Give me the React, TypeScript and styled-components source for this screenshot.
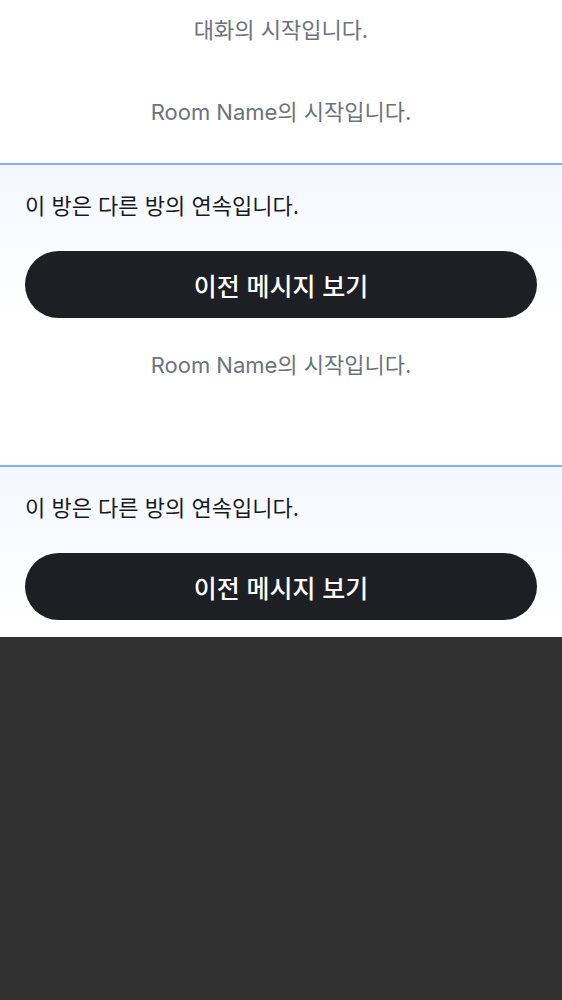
import React from "react";
import styled, { createGlobalStyle } from "styled-components";

const Global = createGlobalStyle`
  html, body { margin: 0; padding: 0; background: #313131; }
  body { font-family: Inter, "Noto Sans CJK KR", sans-serif; }
`;

const Timeline = styled.div`
  width: 562px;
  background: #ffffff;
  display: flex;
  flex-direction: column;
`;

const Notice = styled.div<{ $top: number; $bottom: number }>`
  padding: ${(p) => p.$top}px 0 ${(p) => p.$bottom}px;
  text-align: center;
  font-size: 22px;
  line-height: 28px;
  color: #6c737e;
`;

const Continuation = styled.section`
  border-top: 2px solid #7fb2f5;
  background: linear-gradient(180deg, #f3f7ff 0%, #ffffff 90%);
  padding: 27px 25px 17px;
  display: flex;
  flex-direction: column;
`;

const ContText = styled.p`
  margin: 0 0 31px;
  font-size: 22px;
  line-height: 28px;
  color: #17191c;
`;

const HistoryButton = styled.button`
  height: 67px;
  width: 100%;
  border: none;
  border-radius: 34px;
  background: #1e1f24;
  color: #ffffff;
  font-family: Inter, "Noto Sans CJK KR", sans-serif;
  font-size: 25px;
  font-weight: 500;
  cursor: pointer;
`;

function ContinuationBlock() {
  return (
    <Continuation>
      <ContText>이 방은 다른 방의 연속입니다.</ContText>
      <HistoryButton>이전 메시지 보기</HistoryButton>
    </Continuation>
  );
}

export default function App() {
  return (
    <>
      <Global />
      <Timeline>
        <Notice $top={16} $bottom={16}>대화의 시작입니다.</Notice>
        <Notice $top={38} $bottom={37}>Room Name의 시작입니다.</Notice>
        <ContinuationBlock />
        <Notice $top={16} $bottom={86}>Room Name의 시작입니다.</Notice>
        <ContinuationBlock />
      </Timeline>
    </>
  );
}
